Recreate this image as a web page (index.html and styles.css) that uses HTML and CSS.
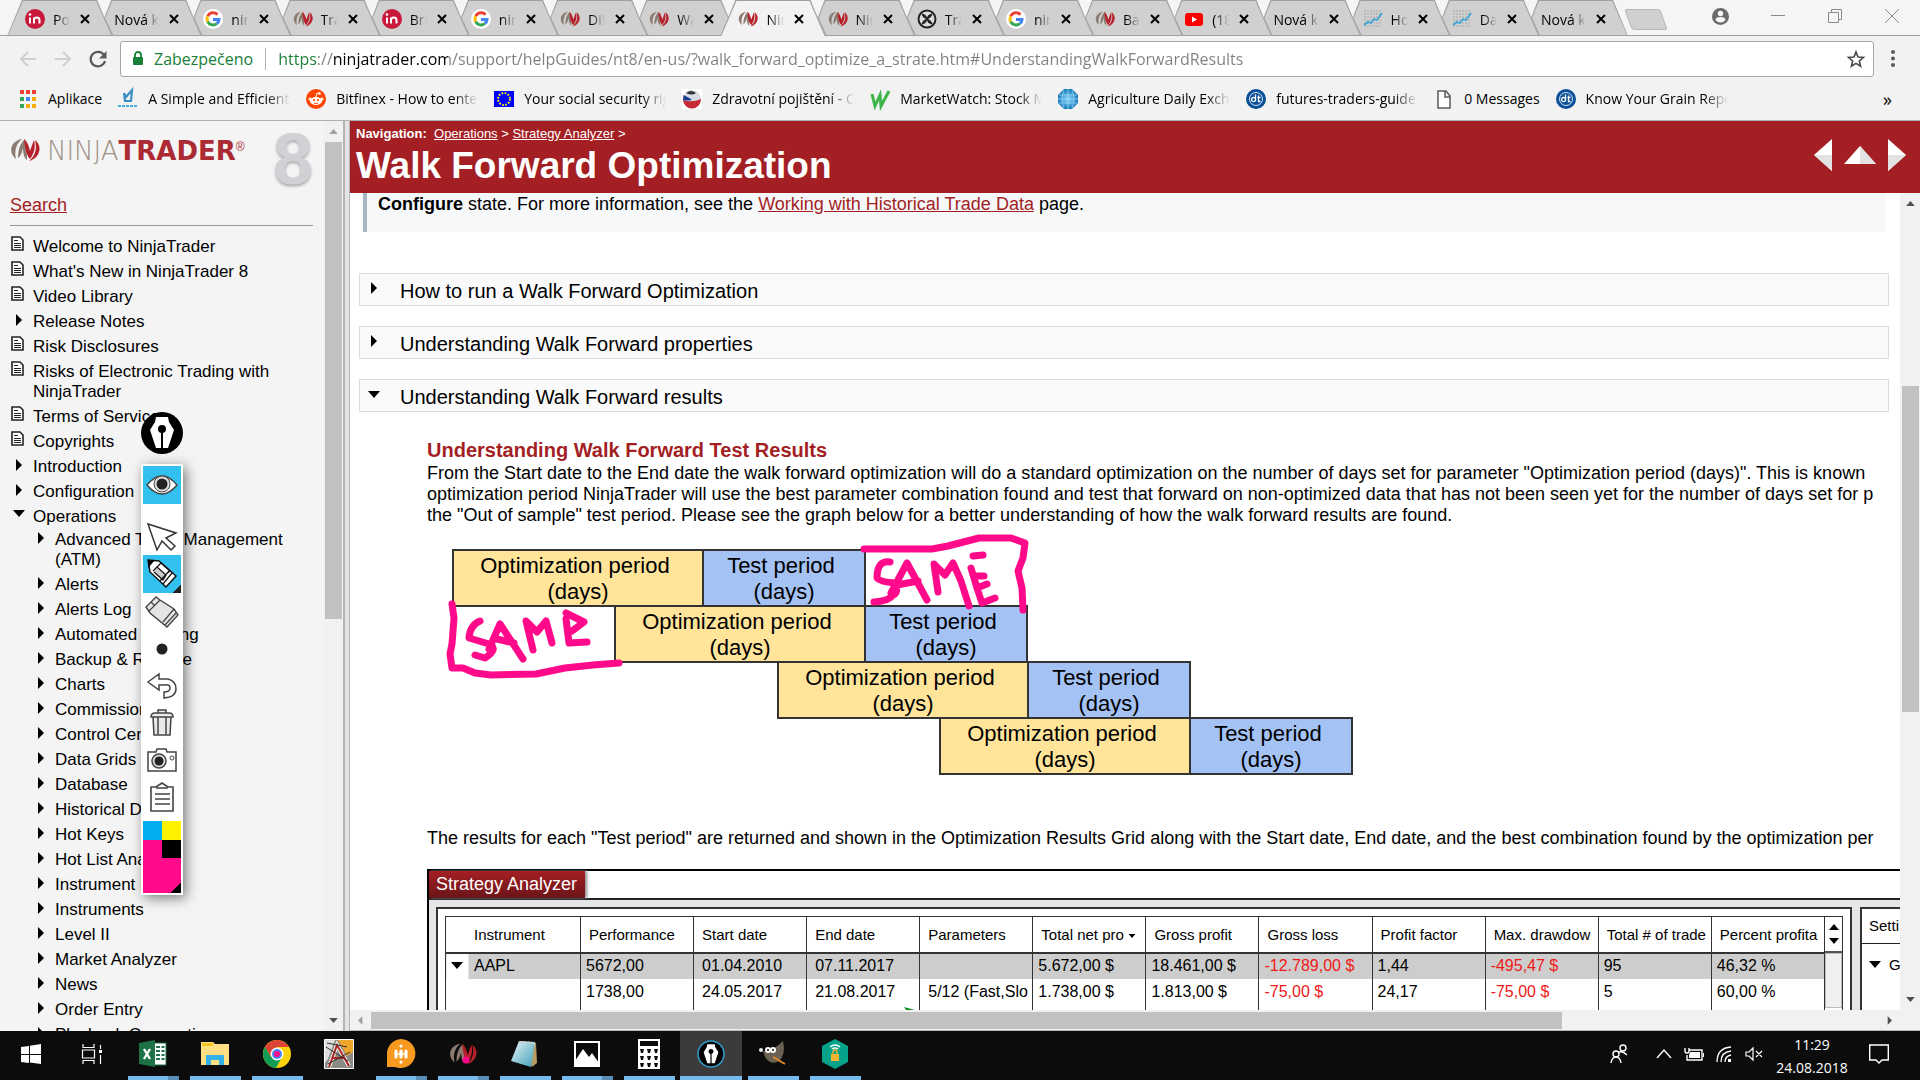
FILE: index.html
```
<!DOCTYPE html>
<html lang="en">
<head>
    <meta charset="UTF-8">
    <meta name="viewport" content="width=device-width, initial-scale=1.0">
    <title>Walk Forward Optimization</title>
    <link rel="stylesheet" href="styles.css">
</head>
<body>
    <!-- shared icons -->
    <svg class="defs" width="0" height="0">
        <defs>
            <linearGradient id="glass" x1="0" y1="0" x2="1" y2="1"><stop offset="0" stop-color="#e6f6fa"/><stop offset="1" stop-color="#3f9db5"/></linearGradient>
            <radialGradient id="globe"><stop offset="0" stop-color="#8fdcff"/><stop offset="1" stop-color="#1779b8"/></radialGradient>
        </defs>
        <symbol id="i-in" viewBox="0 0 20 20"><circle cx="10" cy="10" r="10" fill="#c8193c"/><path d="M5 8.500v6M9 14.500v-6M9 11q0-2.500 2.700-2.500T14.500 11v3.500" fill="none" stroke="#fff" stroke-width="2"/><circle cx="5" cy="5.500" r="1.300" fill="#fff"/></symbol>
        <symbol id="i-google" viewBox="0 0 20 20"><circle cx="10" cy="10" r="10" fill="#fff"/><g fill="none" stroke-width="3"><path d="M14.500 5.600A6 6 0 0 0 4.700 7.200" stroke="#ea4335"/><path d="M4.700 7.200a6 6 0 0 0 0 5.600" stroke="#fbbc05"/><path d="M4.700 12.800a6 6 0 0 0 9.100 1.800" stroke="#34a853"/><path d="M13.800 14.600A6 6 0 0 0 16 10.500h-6" stroke="#4285f4"/></g></symbol>
        <symbol id="i-ninja" viewBox="0 0 30 24"><path d="M6 21C-2 15 0 3 12 1 6 6 4 13 6 21zM8 20c0-8 2-14 6-18 2 5 3 10 3 20-3-2-4-7-4-12-1 4-2 8-5 10z" fill="#8c7b70"/><path d="M25 2c8 6 5 18-6 21 7-6 8-13 6-21zM14 1c2 1 5 6 6 12 1-3 2-6 4-11 2 7 0 14-4 19-4-4-5-12-6-20z" fill="#b5202b"/></symbol>
        <symbol id="i-ring" viewBox="0 0 20 20"><circle cx="10" cy="10" r="8.500" fill="#ddd" stroke="#222" stroke-width="2"/><path d="M5 5l10 10M15 5L5 15" stroke="#222" stroke-width="1.500"/><path d="M5 5q5 0 5 5-5-1-5-5zM15 5q-5 0-5 5 5-1 5-5zM5 15q0-4 5-5 0 5-5 5zM15 15q0-4-5-5 0 5 5 5z" fill="#222"/></symbol>
        <symbol id="i-youtube" viewBox="0 0 20 20"><rect x="1" y="4" width="18" height="13" rx="3" fill="#f00"/><path d="M8 7.500v6l5-3z" fill="#fff"/></symbol>
        <symbol id="i-chart" viewBox="0 0 20 20"><path d="M1 2h18M1 5h18M1 8h18M1 11h18M1 14h18M1 17h18" stroke="#b5b5b5" stroke-width="1.600" stroke-dasharray="2 1"/><path d="M1 16l4-3 3 1 3-4 3 1 5-7" fill="none" stroke="#3aa5d6" stroke-width="1.800"/></symbol>
        <symbol id="i-x" viewBox="0 0 10 10"><path d="M1 1l8 8M9 1L1 9" stroke="currentColor" stroke-width="2"/></symbol>
        <symbol id="i-page" viewBox="0 0 13 15"><path d="M1 1h8l3 3v10H1z" fill="#fff" stroke="#222" stroke-width="1.600"/><path d="M3 4.500h4M3 7.500h7M3 9.500h7M3 11.500h7" stroke="#222"/></symbol>
        <symbol id="i-right" viewBox="0 0 7 12"><path d="M1 0l6 6-6 6z" fill="currentColor"/></symbol>
        <symbol id="i-down" viewBox="0 0 12 7"><path d="M0 0h12L6 7z" fill="currentColor"/></symbol>
        <symbol id="i-nib" viewBox="0 0 26 32"><path d="M7 0h12l1 5 5 8-6 18h-5V14h-2v17H7L1 13l5-8z" fill="#fff"/><circle cx="13" cy="12" r="4" fill="#000"/></symbol>
        <symbol id="i-dt" viewBox="0 0 20 20"><circle cx="10" cy="10" r="10" fill="#0b4f98"/><circle cx="10" cy="10" r="6.500" fill="none" stroke="#d7e6f5"/><path d="M9.500 5.500v7M9.500 10.500a2 2 0 1 0 0 .1M12.500 6.500v6h2M11.500 8.500h3" fill="none" stroke="#fff" stroke-width="1.300"/></symbol>
    </svg>

    <header class="browser">
        <div class="tabstrip">
            <ul class="tabs">
                <li class="tab"><svg class="fav"><use href="#i-in"/></svg><span class="tab-title">Pol</span><button class="tab-close" aria-label="Close"><svg><use href="#i-x"/></svg></button></li>
                <li class="tab"><span class="tab-title">Nová k</span><button class="tab-close" aria-label="Close"><svg><use href="#i-x"/></svg></button></li>
                <li class="tab"><svg class="fav"><use href="#i-google"/></svg><span class="tab-title">nin</span><button class="tab-close" aria-label="Close"><svg><use href="#i-x"/></svg></button></li>
                <li class="tab"><svg class="fav"><use href="#i-ninja"/></svg><span class="tab-title">Tra</span><button class="tab-close" aria-label="Close"><svg><use href="#i-x"/></svg></button></li>
                <li class="tab"><svg class="fav"><use href="#i-in"/></svg><span class="tab-title">Bri</span><button class="tab-close" aria-label="Close"><svg><use href="#i-x"/></svg></button></li>
                <li class="tab"><svg class="fav"><use href="#i-google"/></svg><span class="tab-title">nin</span><button class="tab-close" aria-label="Close"><svg><use href="#i-x"/></svg></button></li>
                <li class="tab"><svg class="fav"><use href="#i-ninja"/></svg><span class="tab-title">Dif</span><button class="tab-close" aria-label="Close"><svg><use href="#i-x"/></svg></button></li>
                <li class="tab"><svg class="fav"><use href="#i-ninja"/></svg><span class="tab-title">Wa</span><button class="tab-close" aria-label="Close"><svg><use href="#i-x"/></svg></button></li>
                <li class="tab active"><svg class="fav"><use href="#i-ninja"/></svg><span class="tab-title">Nin</span><button class="tab-close" aria-label="Close"><svg><use href="#i-x"/></svg></button></li>
                <li class="tab"><svg class="fav"><use href="#i-ninja"/></svg><span class="tab-title">Nin</span><button class="tab-close" aria-label="Close"><svg><use href="#i-x"/></svg></button></li>
                <li class="tab"><svg class="fav"><use href="#i-ring"/></svg><span class="tab-title">Tra</span><button class="tab-close" aria-label="Close"><svg><use href="#i-x"/></svg></button></li>
                <li class="tab"><svg class="fav"><use href="#i-google"/></svg><span class="tab-title">nin</span><button class="tab-close" aria-label="Close"><svg><use href="#i-x"/></svg></button></li>
                <li class="tab"><svg class="fav"><use href="#i-ninja"/></svg><span class="tab-title">Ba</span><button class="tab-close" aria-label="Close"><svg><use href="#i-x"/></svg></button></li>
                <li class="tab"><svg class="fav"><use href="#i-youtube"/></svg><span class="tab-title">(18</span><button class="tab-close" aria-label="Close"><svg><use href="#i-x"/></svg></button></li>
                <li class="tab"><span class="tab-title">Nová k</span><button class="tab-close" aria-label="Close"><svg><use href="#i-x"/></svg></button></li>
                <li class="tab"><svg class="fav"><use href="#i-chart"/></svg><span class="tab-title">Ho</span><button class="tab-close" aria-label="Close"><svg><use href="#i-x"/></svg></button></li>
                <li class="tab"><svg class="fav"><use href="#i-chart"/></svg><span class="tab-title">Da</span><button class="tab-close" aria-label="Close"><svg><use href="#i-x"/></svg></button></li>
                <li class="tab"><span class="tab-title">Nová k</span><button class="tab-close" aria-label="Close"><svg><use href="#i-x"/></svg></button></li>
            </ul>
            <button class="new-tab" aria-label="New tab"></button>
            <div class="window-buttons">
                <button aria-label="Profile"><svg width="17" height="17" viewBox="0 0 17 17"><circle cx="8.500" cy="8.500" r="8.500" fill="#6b6b6b"/><circle cx="8.500" cy="5.500" r="2.700" fill="#f5f5f5"/><path d="M3.500 12q0-3 5-3t5 3q-2 2.500-5 2.500T3.500 12z" fill="#f5f5f5"/></svg></button>
                <button aria-label="Minimize"><svg width="14" height="14" viewBox="0 0 14 14"><path d="M0 6.500h14" stroke="#8a8a8a"/></svg></button>
                <button aria-label="Restore"><svg width="14" height="14" viewBox="0 0 14 14"><path d="M.5 3.500h10v10H.5zM3.500 3V.5h10v10H11" fill="none" stroke="#8a8a8a"/></svg></button>
                <button aria-label="Close"><svg width="14" height="14" viewBox="0 0 14 14"><path d="M0 0l14 14M14 0L0 14" stroke="#8a8a8a"/></svg></button>
            </div>
        </div>
        <div class="toolbar">
            <button aria-label="Back"><svg width="18" height="18" viewBox="0 0 18 18"><path d="M17 9H2M9 2L2 9l7 7" fill="none" stroke="#cfcfcf" stroke-width="2"/></svg></button>
            <button aria-label="Forward"><svg width="18" height="18" viewBox="0 0 18 18"><path d="M1 9h15M9 2l7 7-7 7" fill="none" stroke="#cfcfcf" stroke-width="2"/></svg></button>
            <button aria-label="Reload"><svg width="18" height="18" viewBox="0 0 18 18"><path d="M15 5A7.300 7.300 0 1 0 16 11" fill="none" stroke="#5a5a5a" stroke-width="2.200"/><path d="M17.500 1v7.500H10z" fill="#5a5a5a"/></svg></button>
            <div class="omnibox">
                <svg width="12" height="15" viewBox="0 0 12 15"><path d="M3 6V4a3 3 0 0 1 6 0v2" fill="none" stroke="#188038" stroke-width="1.800"/><rect x="1" y="6" width="10" height="8" rx="1" fill="#188038"/></svg>
                <label class="secure" for="url">Zabezpečeno</label>
                <input id="url" type="text" value="https://ninjatrader.com/support/helpGuides/nt8/en-us/?walk_forward_optimize_a_strate.htm#UnderstandingWalkForwardResults">
                <button aria-label="Bookmark"><svg width="18" height="18" viewBox="0 0 18 18"><path d="M9 2l2 5 5.500.4-4.200 3.600 1.300 5.300L9 13.400l-4.600 2.900L5.700 11 1.500 7.400 7 7z" fill="none" stroke="#4a4a4a" stroke-width="1.600"/></svg></button>
            </div>
            <button aria-label="Menu"><svg width="4" height="18" viewBox="0 0 4 18"><g fill="#5a5a5a"><circle cx="2" cy="2" r="2"/><circle cx="2" cy="8.500" r="2"/><circle cx="2" cy="15" r="2"/></g></svg></button>
        </div>
        <nav class="bookmarks">
            <a href="#"><svg class="fav" viewBox="0 0 20 20"><path d="M2 1h4v4H2zM8 1h4v4H8zM14 1h4v4h-4z" fill="#ea4335"/><path d="M2 8h4v4H2z" fill="#34a853"/><path d="M8 8h4v4H8z" fill="#4285f4"/><path d="M14 8h4v4h-4zM8 15h4v4H8zM14 15h4v4h-4z" fill="#fbab05"/><path d="M2 15h4v4H2z" fill="#34a853"/></svg><span>Aplikace</span></a>
            <a class="faded" href="#"><svg class="fav" viewBox="0 0 20 20"><path d="M6 4l1 8h6l1-11-6 7-2-4" fill="none" stroke="#3a8fc4" stroke-width="2.200"/><path d="M0 17h20" stroke="#45aee5" stroke-width="2" stroke-dasharray="3 1"/></svg><span>A Simple and Efficient</span></a>
            <a class="faded" href="#"><svg class="fav" viewBox="0 0 20 20"><circle cx="10" cy="10" r="10" fill="#ff4500"/><ellipse cx="10" cy="12" rx="6" ry="4" fill="#fff"/><circle cx="4" cy="10" r="1.500" fill="#fff"/><circle cx="16" cy="10" r="1.500" fill="#fff"/><circle cx="13.500" cy="4.500" r="1.300" fill="#fff"/><path d="M10 8l1-4 2.500.5" fill="none" stroke="#fff"/><circle cx="8" cy="11" r="1.100" fill="#ff4500"/><circle cx="12" cy="11" r="1.100" fill="#ff4500"/><path d="M8 14q2 1 4 0" fill="none" stroke="#ff4500"/></svg><span>Bitfinex - How to ente</span></a>
            <a class="faded" href="#"><svg class="fav" viewBox="0 0 20 20"><path d="M0 2h20v16H0z" fill="#00f"/><circle cx="10" cy="10" r="6" fill="none" stroke="#ff0" stroke-width="2" stroke-dasharray="1.600 1.540"/></svg><span>Your social security rig</span></a>
            <a class="faded" href="#"><svg class="fav" viewBox="0 0 20 20"><path d="M0 0h20v20H0z" fill="#fff"/><circle cx="10" cy="10" r="9" fill="#d8dde6"/><path d="M1 11q9 3 18-1a9 9 0 0 1-18 1z" fill="#c62a35"/><path d="M1.500 6Q8 9 10 11q-5 1-9 0z" fill="#1b3d8d"/><path d="M4 4q5-4 10 0-4 3-10 0z" fill="#333"/></svg><span>Zdravotní pojištění - C</span></a>
            <a class="faded" href="#"><svg class="fav" viewBox="0 0 20 20"><path d="M2 5l3 12 5-11 1 11L19 2" fill="none" stroke="#3db54a" stroke-width="3"/></svg><span>MarketWatch: Stock M</span></a>
            <a class="faded" href="#"><svg class="fav" viewBox="0 0 20 20"><path d="M6 0h8l6 6v8l-6 6H6l-6-6V6z" fill="url(#globe)"/><path d="M1 6h18M0 10h20M1 14h18M6 1q-4 9 0 18M10 0v20M14 1q4 9 0 18" fill="none" stroke="#9bdcf7" stroke-width=".7"/></svg><span>Agriculture Daily Exch</span></a>
            <a class="faded" href="#"><svg class="fav"><use href="#i-dt"/></svg><span>futures-traders-guide</span></a>
            <a href="#"><svg class="fav" viewBox="0 0 20 20"><path d="M4 2h8l4 5v12H4zM11 2v6h5" fill="#fff" stroke="#5a5a5a" stroke-width="1.500"/></svg><span>0 Messages</span></a>
            <a class="faded" href="#"><svg class="fav"><use href="#i-dt"/></svg><span>Know Your Grain Repo</span></a>
            <button class="more" aria-label="More bookmarks">»</button>
        </nav>
    </header>

    <div class="frames">
        <aside class="sidebar">
            <div class="sidebar-body">
                <div class="logo">
                    <svg class="logo-mark"><use href="#i-ninja"/></svg>
                    <span class="logo-text">NINJA<b>TRADER</b></span>
                    <span class="logo-reg">®</span>
                    <span class="logo-eight">8</span>
                </div>
                <a class="search" href="#">Search</a>
                <ul class="tree">
                    <li><svg class="page"><use href="#i-page"/></svg><a href="#">Welcome to NinjaTrader</a></li>
                    <li><svg class="page"><use href="#i-page"/></svg><a href="#">What's New in NinjaTrader 8</a></li>
                    <li><svg class="page"><use href="#i-page"/></svg><a href="#">Video Library</a></li>
                    <li><svg class="closed"><use href="#i-right"/></svg><a href="#">Release Notes</a></li>
                    <li><svg class="page"><use href="#i-page"/></svg><a href="#">Risk Disclosures</a></li>
                    <li><svg class="page"><use href="#i-page"/></svg><a href="#">Risks of Electronic Trading with NinjaTrader</a></li>
                    <li><svg class="page"><use href="#i-page"/></svg><a href="#">Terms of Service</a></li>
                    <li><svg class="page"><use href="#i-page"/></svg><a href="#">Copyrights</a></li>
                    <li><svg class="closed"><use href="#i-right"/></svg><a href="#">Introduction</a></li>
                    <li><svg class="closed"><use href="#i-right"/></svg><a href="#">Configuration</a></li>
                    <li><svg class="open"><use href="#i-down"/></svg><a href="#">Operations</a></li>
                </ul>
                <ul class="tree subtree">
                    <li><svg class="closed"><use href="#i-right"/></svg><a href="#">Advanced Trade Management (ATM)</a></li>
                    <li><svg class="closed"><use href="#i-right"/></svg><a href="#">Alerts</a></li>
                    <li><svg class="closed"><use href="#i-right"/></svg><a href="#">Alerts Log</a></li>
                    <li><svg class="closed"><use href="#i-right"/></svg><a href="#">Automated Trading</a></li>
                    <li><svg class="closed"><use href="#i-right"/></svg><a href="#">Backup &amp; Restore</a></li>
                    <li><svg class="closed"><use href="#i-right"/></svg><a href="#">Charts</a></li>
                    <li><svg class="closed"><use href="#i-right"/></svg><a href="#">Commissions</a></li>
                    <li><svg class="closed"><use href="#i-right"/></svg><a href="#">Control Center</a></li>
                    <li><svg class="closed"><use href="#i-right"/></svg><a href="#">Data Grids</a></li>
                    <li><svg class="closed"><use href="#i-right"/></svg><a href="#">Database</a></li>
                    <li><svg class="closed"><use href="#i-right"/></svg><a href="#">Historical Data</a></li>
                    <li><svg class="closed"><use href="#i-right"/></svg><a href="#">Hot Keys</a></li>
                    <li><svg class="closed"><use href="#i-right"/></svg><a href="#">Hot List Analyzer</a></li>
                    <li><svg class="closed"><use href="#i-right"/></svg><a href="#">Instrument Lists</a></li>
                    <li><svg class="closed"><use href="#i-right"/></svg><a href="#">Instruments</a></li>
                    <li><svg class="closed"><use href="#i-right"/></svg><a href="#">Level II</a></li>
                    <li><svg class="closed"><use href="#i-right"/></svg><a href="#">Market Analyzer</a></li>
                    <li><svg class="closed"><use href="#i-right"/></svg><a href="#">News</a></li>
                    <li><svg class="closed"><use href="#i-right"/></svg><a href="#">Order Entry</a></li>
                    <li><svg class="closed"><use href="#i-right"/></svg><a href="#">Playback Connection</a></li>
                </ul>
            </div>
            <div class="vscroll">
                <svg class="up"><use href="#i-down"/></svg>
                <div class="track"><div class="thumb side-thumb"></div></div>
                <svg class="down"><use href="#i-down"/></svg>
            </div>
        </aside>
        <div class="splitter"></div>

        <main class="content">
            <header class="topic-header">
                <div>
                    <p class="crumbs"><b>Navigation:</b>&nbsp; <a href="#">Operations</a> &gt; <a href="#">Strategy Analyzer</a> &gt;</p>
                    <h1>Walk Forward Optimization</h1>
                </div>
                <div class="pager">
                    <a href="#" aria-label="Previous"><svg width="18" height="32" viewBox="0 0 18 32"><path d="M18 0v32L0 16z" fill="#fff"/><path d="M18 16v16L0 16z" fill="#e3e3e3"/></svg></a>
                    <a href="#" aria-label="Up"><svg width="32" height="18" viewBox="0 0 32 18"><path d="M16 0l16 18H0z" fill="#fff"/><path d="M16 0l16 18H16z" fill="#e3e3e3"/></svg></a>
                    <a href="#" aria-label="Next"><svg width="18" height="32" viewBox="0 0 18 32"><path d="M0 0v32l18-16z" fill="#fff"/><path d="M0 16v16l18-16z" fill="#e3e3e3"/></svg></a>
                </div>
            </header>
            <div class="topic-row">
                <div class="topic">
                    <p class="note"><b>Configure</b> state. For more information, see the <a href="#">Working with Historical Trade Data</a> page.</p>
                    <button class="toggle"><svg class="closed"><use href="#i-right"/></svg>How to run a Walk Forward Optimization</button>
                    <button class="toggle"><svg class="closed"><use href="#i-right"/></svg>Understanding Walk Forward properties</button>
                    <button class="toggle"><svg class="open"><use href="#i-down"/></svg>Understanding Walk Forward results</button>

                    <section class="results">
                        <h2>Understanding Walk Forward Test Results</h2>
                        <p>From the Start date to the End date the walk forward optimization will do a standard optimization on the number of days set for parameter "Optimization period (days)". This is known<br>
                        optimization period NinjaTrader will use the best parameter combination found and test that forward on non-optimized data that has not been seen yet for the number of days set for p<br>
                        the "Out of sample" test period. Please see the graph below for a better understanding of how the walk forward results are found.</p>

                        <div class="periods">
                            <div class="period-row"><span class="opt">Optimization period&nbsp;<br>(days)</span><span class="test">Test period&nbsp;<br>(days)</span></div>
                            <div class="period-row step-1"><span class="opt">Optimization period&nbsp;<br>(days)</span><span class="test">Test period&nbsp;<br>(days)</span></div>
                            <div class="period-row step-2"><span class="opt">Optimization period&nbsp;<br>(days)</span><span class="test">Test period&nbsp;<br>(days)</span></div>
                            <div class="period-row step-3"><span class="opt">Optimization period&nbsp;<br>(days)</span><span class="test">Test period&nbsp;<br>(days)</span></div>
                            <!-- pen marks -->
                            <svg class="ink" width="600" height="160" viewBox="0 0 600 160">
                                <path d="M412 0h68l16-3 31-8h32l14 5-2 15-5 13 4 17 1 22"/>
                                <path d="M438 13q-13-2-13 16 3 4 18 5 4 10-2 12-4 6-19 7M439 44l16-30 20 37M445 36l21-4M486 43l-4-28 11 11 8-12 8 18 8 25M521 7l10-1M519 19l6 20 5 15 13-5M523 27h9M525 39l10-4"/>
                                <path d="M0 55l2 14-2 26-2 10 2 14h11l12 5 16 2 45-1 29-6 28-3 26-2"/>
                                <path d="M28 72q-10 4-11 17l20 6q10 5-4 14l-10-3M37 100l11-25 23 35M45 90l17 4M81 101l-7-29 11 11 9-11 6 22M114 64l18 9-12 9M114 70l3 24 18-1"/>
                            </svg>
                        </div>

                        <p>The results for each "Test period" are returned and shown in the Optimization Results Grid along with the Start date, End date, and the best combination found by the optimization per</p>

                        <div class="analyzer">
                            <div class="analyzer-title"><span>Strategy Analyzer</span></div>
                            <div class="analyzer-body">
                                <div class="grid-box">
                                    <table class="grid">
                                        <thead>
                                            <tr><th class="first">Instrument</th><th>Performance</th><th>Start date</th><th>End date</th><th>Parameters</th><th>Total net pro <svg class="sort"><use href="#i-down"/></svg></th><th>Gross profit</th><th>Gross loss</th><th>Profit factor</th><th>Max. drawdow</th><th>Total # of trade</th><th>Percent profita</th></tr>
                                        </thead>
                                        <tbody>
                                            <tr class="selected"><td class="first"><svg class="open"><use href="#i-down"/></svg>AAPL</td><td>5672,00</td><td class="wide">01.04.2010</td><td class="wide">07.11.2017</td><td></td><td>5.672,00 $</td><td>18.461,00 $</td><td class="neg">-12.789,00 $</td><td>1,44</td><td class="neg">-495,47 $</td><td>95</td><td>46,32 %</td></tr>
                                            <tr><td class="first"></td><td>1738,00</td><td class="wide">24.05.2017</td><td class="wide">21.08.2017</td><td class="wide">5/12 (Fast,Slo</td><td>1.738,00 $</td><td>1.813,00 $</td><td class="neg">-75,00 $</td><td>24,17</td><td class="neg">-75,00 $</td><td>5</td><td>60,00 %</td></tr>
                                            <tr><td class="first"></td><td></td><td></td><td></td><td></td><td></td><td></td><td></td><td></td><td></td><td></td><td></td></tr>
                                        </tbody>
                                    </table>
                                    <div class="grid-scroll">
                                        <div class="spin"><svg class="up"><use href="#i-down"/></svg><svg class="down"><use href="#i-down"/></svg></div>
                                        <div class="grid-thumb"></div>
                                    </div>
                                    <svg class="arrow-tip" width="18" height="12" viewBox="0 0 18 12"><path d="M0 0l18 5v7H8z" fill="#0a8f1c"/></svg>
                                </div>
                                <div class="settings-box">
                                    <div class="settings-title">Setti</div>
                                    <div class="settings-group"><svg class="open"><use href="#i-down"/></svg>G</div>
                                </div>
                            </div>
                        </div>
                    </section>
                </div>
                <div class="vscroll">
                    <svg class="up dark"><use href="#i-down"/></svg>
                    <div class="track"><div class="thumb main-thumb"></div></div>
                    <svg class="down"><use href="#i-down"/></svg>
                </div>
            </div>
            <div class="hscroll">
                <svg class="left"><use href="#i-right"/></svg>
                <div class="track"><div class="thumb"></div></div>
                <svg class="right"><use href="#i-right"/></svg>
            </div>
        </main>
    </div>

    <footer class="taskbar">
        <button class="start" aria-label="Start"><svg width="20" height="20" viewBox="0 0 20 20"><path d="M0 3l8-1v8H0zM9 1.800L20 0v10H9zM0 11h8v8l-8-1zM9 11h11v9L9 18.500z" fill="#fff"/></svg></button>
        <button class="start" aria-label="Task view"><svg width="20" height="20" viewBox="0 0 20 20"><path d="M1 0v3.500h11V0M1 20v-3.500h11V20M.5 6h12v8H.5zM18.500 1v4M18.500 11v9" fill="none" stroke="#fff" stroke-width="1.200"/><path d="M17 6h3v3h-3z" fill="#fff"/></svg></button>
        <button class="running stacked" aria-label="Excel"><svg width="28" height="28" viewBox="0 0 28 28"><path d="M15 3h12v22H15z" fill="#fff" stroke="#1e7145"/><path d="M17 7h4M17 11h4M17 15h4M17 19h4M22.500 7h3M22.500 11h3M22.500 15h3M22.500 19h3" stroke="#1e7145" stroke-width="2"/><path d="M0 3l16-3v27L0 24z" fill="#1e7145"/><path d="M5 9l6 10M11 9L5 19" stroke="#fff" stroke-width="2.400"/></svg></button>
        <button class="running" aria-label="Explorer"><svg width="28" height="24" viewBox="0 0 28 24"><path d="M0 0h12l2 2h14v21H0z" fill="#ffdf84"/><path d="M1 1h11v3H1z" fill="#f7c21b"/><path d="M5 13h18v10h-5v-5h-8v5H5z" fill="#33b1e8"/></svg></button>
        <button class="running" aria-label="Chrome"><svg width="28" height="28" viewBox="0 0 28 28"><circle cx="14" cy="14" r="14" fill="#fcd20b"/><path d="M1.900 7A14 14 0 0 1 26.100 7H14l-6 10z" fill="#db4437"/><path d="M1.900 7A14 14 0 0 0 13 28l6-11H8z" fill="#0f9d58"/><circle cx="14" cy="14" r="6.500" fill="#fff"/><circle cx="14" cy="14" r="5" fill="#4285f4"/><circle cx="14" cy="14" r="3" fill="#ff0a8a"/></svg></button>
        <button aria-label="Editor"><svg width="30" height="30" viewBox="0 0 30 30"><path d="M.5.500h29v29H.5z" fill="#8b8b86"/><path d="M1 1h10L4 20l-3 4z" fill="#ddd"/><path d="M14 1h15v12l-6 4z" fill="#f0a52b"/><path d="M5 28l8-22 12 21" fill="none" stroke="#eee" stroke-width="4"/><path d="M5 28l8-22 12 21M8 19h12" fill="none" stroke="#b3231f" stroke-width="2"/><path d="M2 8l22 14M4 25l22-12M3 4l20 4" stroke="#333"/><path d="M.5.500h29v29H.5z" fill="none" stroke="#fff"/></svg></button>
        <button class="running stacked" aria-label="Chat"><svg width="30" height="30" viewBox="0 0 30 30"><path d="M15 0a15 14.500 0 1 1-6 28H1V16A15 15 0 0 1 15 0z" fill="#f79a1f"/><g stroke="#fff" stroke-width="3.200" stroke-linecap="round"><path d="M10 12v6M15 12v6M20 12v6M15 7v.1M15 23v.1"/></g><path d="M9 15h12" stroke="#fff" stroke-width="1.500"/></svg></button>
        <button class="running stacked" aria-label="NinjaTrader"><svg width="28" height="24"><use href="#i-ninja"/><circle cx="17" cy="18" r="3.500" fill="#ff0a8a"/></svg></button>
        <button class="running" aria-label="Notes"><svg width="28" height="28" viewBox="0 0 28 28"><path d="M8 1l17 2 1 20-5 4z" fill="#b79b63"/><path d="M8 1l16 1-4 25L0 21z" fill="url(#glass)"/><path d="M8 2l16 1" stroke="#ccc" stroke-width="2" stroke-dasharray="2 1"/></svg></button>
        <button class="running stacked" aria-label="Photos"><svg width="26" height="26" viewBox="0 0 26 26"><path d="M1 1h24v24H1z" fill="#0c0c0c" stroke="#fff" stroke-width="2"/><path d="M1 20l8-12 6 8 3-4 7 10v3H1z" fill="#fff"/></svg></button>
        <button class="running" aria-label="Calculator"><svg width="22" height="30" viewBox="0 0 22 30"><path d="M0 0h22v30H0z" fill="#fff"/><path d="M2 2h18v5H2zM2 10h4l-1 4H3zM9 10h4l-1 4h-2zM16 10h4l-1 4h-2zM2 17h4l-1 4H3zM9 17h4l-1 4h-2zM16 17h4l-1 4h-2zM2 24h4l-1 4H3zM9 24h4l-1 4h-2zM16 24h4l-1 4h-2z" fill="#0c0c0c"/></svg></button>
        <button class="running current" aria-label="Pen"><svg width="28" height="28" viewBox="0 0 28 28"><circle cx="14" cy="14" r="13" fill="#000" stroke="#2f9fc6" stroke-width="1.500"/><use href="#i-nib" x="6" y="4" width="16" height="20"/></svg></button>
        <button class="running" aria-label="Gimp"><svg width="28" height="26" viewBox="0 0 28 26"><path d="M24 0q3 14-4 20-8 5-14-4l-2-6q8 2 20-10z" fill="#6b6255"/><circle cx="9" cy="9" r="3" fill="#fff"/><circle cx="14" cy="9" r="3" fill="#fff"/><circle cx="9" cy="9" r="1"/><circle cx="14" cy="9" r="1"/><circle cx="2" cy="9" r="2" fill="#eee"/><path d="M14 16l12 7" stroke="#e58b2a" stroke-width="2"/></svg></button>
        <button class="running" aria-label="Secure"><svg width="28" height="30" viewBox="0 0 28 30"><path d="M14 0l13 7v16l-13 7-13-7V7z" fill="#06a28a"/><path d="M10 15h8v7h-8z" fill="#f5b52d"/><path d="M12 15v-2a2 2 0 0 1 4 0v2" fill="none" stroke="#f5b52d" stroke-width="1.300"/><path d="M9 8q5-4 10 0M11 10q3-2 6 0" fill="none" stroke="#fff" stroke-width="1.300"/></svg></button>
        <div class="tray">
            <button aria-label="People"><svg width="18" height="20" viewBox="0 0 18 20"><g fill="none" stroke="#fff" stroke-width="1.400"><circle cx="13" cy="4" r="3"/><circle cx="6" cy="10" r="3"/><path d="M9 8q4-1 8 3M1 19q1-6 5-6t5 6"/></g></svg></button>
            <button aria-label="Hidden icons"><svg width="16" height="10" viewBox="0 0 16 10"><path d="M1 9l7-8 7 8" fill="none" stroke="#fff" stroke-width="1.400"/></svg></button>
            <button aria-label="Battery"><svg width="20" height="14" viewBox="0 0 20 14"><path d="M5 3h13v10H3V8M1 1v3q0 2 2 2t2-2V1" fill="none" stroke="#fff" stroke-width="1.400"/><path d="M6 5h10v6H5V8zM19 6h1v4h-1z" fill="#fff"/></svg></button>
            <button aria-label="Network"><svg width="16" height="16" viewBox="0 0 16 16"><g fill="none" stroke="#fff" stroke-width="1.300"><path d="M1 16Q1 2 15 1M5 16Q5 6 15 5M9 16q0-6 6-7"/></g><path d="M12 13h3v3h-3z" fill="#fff"/></svg></button>
            <button aria-label="Volume"><svg width="18" height="14" viewBox="0 0 18 14"><path d="M1 5h3l4-4v12L4 9H1zM11 4l6 6M17 4l-6 6" fill="none" stroke="#fff" stroke-width="1.200"/></svg></button>
            <div class="clock"><span>11:29</span><span>24.08.2018</span></div>
            <button aria-label="Notifications"><svg width="20" height="20" viewBox="0 0 20 20"><path d="M.7 1h18.600v15H13l-3 3-3-3H.7z" fill="none" stroke="#fff" stroke-width="1.400"/></svg></button>
        </div>
    </footer>

    <!-- floating pen tool -->
    <div class="pen-tool">
        <button class="pen-badge" aria-label="Pen"><svg width="26" height="32"><use href="#i-nib"/></svg></button>
        <div class="pen-panel">
            <button class="on" aria-label="Show"><svg width="32" height="22" viewBox="0 0 32 22"><path d="M1 11Q16-7 31 11 16 29 1 11z" fill="#fff" stroke="#444" stroke-width="1.400"/><circle cx="16" cy="10" r="8" fill="#ddd" stroke="#444"/><circle cx="16" cy="10" r="5.500" fill="#222"/></svg></button>
            <button class="cursor" aria-label="Select"><svg width="32" height="30" viewBox="0 0 32 30"><path d="M2 2l28 9-10 5 9 8-4 4-9-9-5 9z" fill="#fff" stroke="#333" stroke-width="1.500"/></svg></button>
            <button class="on corner" aria-label="Pencil"><svg width="30" height="30" viewBox="0 0 30 30"><path d="M1 1l11 1 17 15-10 11L3 13z" fill="#fff" stroke="#111" stroke-width="1.500"/><path d="M1 1h7L1 9z"/><path d="M6 12l8-8M10 8l9 8-3 5-9-8" fill="#ccc" stroke="#111" stroke-width="1.200"/><path d="M14 4l9 8-5 4M25 14l-9 11M22 12l-9 10" fill="none" stroke="#111" stroke-width="1.200"/></svg></button>
            <button aria-label="Eraser"><svg width="34" height="32" viewBox="0 0 34 32"><path d="M11 1L1 11l4 6 17 14 11-12-4-6L15 4z" fill="#e4e4e4" stroke="#444" stroke-width="1.400"/><path d="M15 4L4 15M29 13L18 26M31 17L20 29M6 6l4 4" fill="none" stroke="#444" stroke-width="1.200"/></svg></button>
            <button aria-label="Size"><svg width="12" height="12" viewBox="0 0 12 12"><circle cx="6" cy="6" r="5.500" fill="#222"/></svg></button>
            <button aria-label="Undo"><svg width="30" height="26" viewBox="0 0 30 26"><path d="M1 9l11-8v5h9q8 2 8 10t-12 9v-6q6 0 6-4t-5-3h-6v5z" fill="#fff" stroke="#444" stroke-width="1.500"/></svg></button>
            <button aria-label="Delete"><svg width="24" height="28" viewBox="0 0 24 28"><path d="M3 8l1 18h16l1-18M1 8q0-4 4-4h14q4 0 4 4zM8 4V1h8v3M8 8v17M16 8v17" fill="#e9e9e9" stroke="#444" stroke-width="1.500"/></svg></button>
            <button aria-label="Camera"><svg width="30" height="24" viewBox="0 0 30 24"><path d="M1 4h8l1-3h9l1 3h9v19H1z" fill="#fff" stroke="#444" stroke-width="1.500"/><circle cx="12" cy="13" r="7" fill="#ddd" stroke="#444" stroke-width="1.500"/><circle cx="12" cy="13" r="4.500" fill="#222"/><circle cx="25" cy="10" r="2" fill="none" stroke="#444"/></svg></button>
            <button aria-label="Clipboard"><svg width="24" height="30" viewBox="0 0 24 30"><path d="M1 5h5l6-4 6 4h5v24H1z" fill="#fff" stroke="#444" stroke-width="1.600"/><path d="M6 6h12M5 12h15M5 17h15M5 22h15" stroke="#444" stroke-width="1.500"/></svg></button>
            <div class="palette">
                <button class="cyan" aria-label="Cyan"></button>
                <button class="yellow" aria-label="Yellow"></button>
                <button class="magenta" aria-label="Magenta"></button>
                <button class="black" aria-label="Black"></button>
                <button class="chosen" aria-label="Current colour"></button>
            </div>
        </div>
    </div>
</body>
</html>
```
FILE: styles.css
```
* {
    box-sizing: border-box;
}
body {
    display: flex;
    flex-direction: column;
    height: 100vh;
    margin: 0;
    overflow: hidden;
    font-family: "Liberation Sans", Arial, sans-serif;
    color: #000;
    background: #fff;
}
.defs {
    position: absolute;
}
p, h1, h2, ul {
    margin: 0;
    padding: 0;
}
ul {
    list-style: none;
}
button {
    padding: 0;
    border: none;
    background: none;
    font: inherit;
    color: inherit;
}
svg {
    display: block;
    flex: none;
    overflow: visible;
}
.closed {
    width: 7px;
    height: 12px;
}
.open {
    width: 12px;
    height: 7px;
}
.up {
    transform: rotate(180deg);
}

/* browser chrome */
.browser {
    flex: none;
    font-family: "Open Sans", "Segoe UI", sans-serif;
    background: #f2f2f2;
    border-bottom: 1px solid #b0b0b0;
}
.tabstrip {
    display: flex;
    height: 36px;
    padding-left: 7px;
    background: #f5f5f5;
    border-bottom: 1px solid #a0a0a0;
}
.tabs {
    display: flex;
    flex: 1;
    min-width: 0;
    height: 36px;
}
/* slanted tabs, each one tucked under the tab on its left */
.tab {
    position: relative;
    isolation: isolate;
    display: flex;
    align-items: center;
    flex: 1 1 0;
    min-width: 0;
    margin-right: -16px;
    padding: 2px 22px 0 18px;
    font-size: 14px;
    clip-path: polygon(15px 0, calc(100% - 15px) 0, 100% 100%, 16px 100%, 8px 50%);
    background: #a0a0a0;
}
.tab::before {
    content: "";
    position: absolute;
    inset: 0;
    z-index: -1;
    background: #d0d0d0;
    clip-path: polygon(16px 1px, calc(100% - 16px) 1px, calc(100% - 1px) 35px, 17px 35px, 9px 50%);
}
.tab:first-child {
    clip-path: polygon(15px 0, calc(100% - 15px) 0, 100% 100%, 0 100%);
}
.tab:first-child::before {
    clip-path: polygon(16px 1px, calc(100% - 16px) 1px, calc(100% - 1px) 35px, 1px 35px);
}
.tab.active {
    z-index: 1;
    clip-path: polygon(15px 0, calc(100% - 15px) 0, 100% 100%, 0 100%);
}
.tab.active::before {
    background: #f2f2f2;
    clip-path: polygon(16px 1px, calc(100% - 16px) 1px, calc(100% - 1px) 100%, 1px 100%);
}
.fav {
    width: 20px;
    height: 20px;
}
.tab .fav {
    margin-right: 8px;
}
.tab-title {
    flex: 1;
    min-width: 0;
    margin-right: 10px;
    overflow: hidden;
    white-space: nowrap;
    mask-image: linear-gradient(to left, transparent, #000 14px);
}
.tab-close svg {
    width: 10px;
    height: 10px;
}
.new-tab {
    width: 36px;
    height: 21px;
    margin: 9px 47px 0 16px;
    background: #d0d0d0;
    border: 1px solid #b8b8b8;
    border-radius: 3px;
    transform: skewX(20deg);
}
.window-buttons {
    display: flex;
    height: 32px;
}
.window-buttons button {
    display: flex;
    align-items: center;
    justify-content: center;
    width: 57px;
}
.window-buttons button:first-child {
    width: 18px;
    margin-right: 20px;
}
.toolbar {
    display: flex;
    align-items: center;
    gap: 17px;
    height: 45px;
    padding: 0 25px 0 19px;
}
.omnibox {
    display: flex;
    align-items: center;
    flex: 1;
    height: 36px;
    margin-left: -4px;
    padding: 0 8px 0 11px;
    font-size: 16px;
    background: #fff;
    border: 1px solid #a6a6a6;
    border-radius: 3px;
}
.secure {
    margin-left: 10px;
    padding-right: 12px;
    color: #188038;
    border-right: 1px solid #b0b0b0;
}
.omnibox input {
    flex: 1;
    min-width: 0;
    padding: 0 0 0 12px;
    border: none;
    outline: none;
    font: inherit;
    color: transparent;
    /* scheme, separator, host, path */
    background: linear-gradient(to right, #188038 52px, #808080 52px 67px, #000 67px 182px, #808080 182px);
    background-clip: text;
    -webkit-background-clip: text;
}
.bookmarks {
    display: flex;
    align-items: center;
    gap: 16px;
    height: 39px;
    padding: 0 28px 4px 18px;
    font-size: 14px;
}
.bookmarks a {
    display: flex;
    align-items: center;
    gap: 10px;
    color: #000;
    text-decoration: none;
}
.bookmarks span {
    overflow: hidden;
    white-space: nowrap;
}
.bookmarks .faded span {
    width: 142px;
    mask-image: linear-gradient(to left, transparent, #000 24px);
}
.more {
    margin-left: auto;
    font-size: 18px;
}

/* frames */
.frames {
    display: flex;
    flex: 1;
    min-height: 0;
}
.sidebar {
    display: flex;
    flex: none;
    width: 343px;
    background: #f4f4f4;
}
.sidebar-body {
    flex: 1;
    min-width: 0;
    padding: 10px 10px 0;
    overflow: hidden;
}
.logo {
    display: flex;
    height: 64px;
}
.logo-mark {
    width: 30px;
    height: 24px;
    margin-top: 7px;
}
.logo-text {
    margin: 4px 0 0 7px;
    font-family: "DejaVu Sans", Verdana, sans-serif;
    font-size: 26px;
    font-weight: 200;
    line-height: 32px;
    color: #9d9087;
}
.logo-text b {
    font-weight: 700;
    color: #ab2a33;
}
.logo-reg {
    margin-top: 9px;
    font-size: 12px;
    color: #ab2a33;
}
.logo-eight {
    margin-left: auto;
    font-size: 72px;
    font-weight: bold;
    line-height: 56px;
    color: #cfd1d4;
    text-shadow: 0 2px 3px #aaa;
}
.search {
    display: block;
    height: 31px;
    margin-bottom: 11px;
    font-size: 18px;
    line-height: 20px;
    color: #a31f24;
    border-bottom: 1px solid #999;
}
.tree li {
    display: flex;
    margin-bottom: 5px;
    padding-right: 40px;
    font-size: 17px;
    line-height: 20px;
}
.tree a {
    color: #000;
    text-decoration: none;
}
.tree svg {
    margin: 2px 11px 0 5px;
}
.tree .page {
    width: 13px;
    height: 15px;
    margin: -1px 9px 0 1px;
}
.tree .open {
    margin: 3px 8px 0 3px;
}
.subtree {
    margin: -2px -10px 0 22px;
}
.subtree li {
    padding-right: 16px;
}
.vscroll {
    display: flex;
    flex-direction: column;
    align-items: center;
    flex: none;
    width: 20px;
    padding: 8px 0;
    color: #505050;
    background: #f1f1f1;
}
.vscroll svg {
    width: 9px;
    height: 5px;
}
.vscroll .up {
    color: #a0a0a0;
}
.vscroll .dark {
    color: #505050;
}
.vscroll .track {
    flex: 1;
    width: 17px;
    margin: 8px 0;
}
.thumb {
    background: #c1c1c1;
}
.side-thumb {
    height: 55%;
}
.main-thumb {
    height: 42%;
    margin-top: 172px;
}
.splitter {
    flex: none;
    width: 7px;
    background: #e4e4e4;
    border-left: 2px solid #b4b4b4;
    border-right: 1px solid #b4b4b4;
}
.content {
    display: flex;
    flex-direction: column;
    flex: 1;
    min-width: 0;
}
.topic-header {
    display: flex;
    justify-content: space-between;
    flex: none;
    height: 72px;
    padding: 4px 14px 0 6px;
    color: #fff;
    background: #a31f24;
}
.crumbs {
    font-size: 13px;
    line-height: 18px;
}
.crumbs a {
    color: #fff;
}
h1 {
    font-size: 37px;
    line-height: 45px;
}
.pager {
    display: flex;
    align-items: center;
    gap: 12px;
    height: 60px;
}
.topic-row {
    display: flex;
    flex: 1;
    min-height: 0;
}
.topic {
    flex: 1;
    min-width: 0;
    padding: 0 11px 0 9px;
    overflow: hidden;
    white-space: nowrap;
}
.note {
    height: 39px;
    margin: 0 4px 41px;
    padding: 1px 0 0 11px;
    font-size: 18px;
    line-height: 21px;
    background: #f7f8fa;
    border-left: 4px solid #a8b5c5;
}
.note a {
    color: #a31f24;
}
.toggle {
    position: relative;
    display: block;
    width: 100%;
    height: 33px;
    margin-bottom: 20px;
    padding: 4px 0 0 40px;
    font-size: 20px;
    text-align: left;
    background: #fafafa;
    border: 1px solid #dcdcdc;
}
.toggle svg {
    position: absolute;
    left: 10px;
    top: 8px;
}
.toggle .open {
    left: 8px;
    top: 11px;
}
.results {
    padding: 5px 0 0 68px;
}
.results h2 {
    font-size: 20px;
    line-height: 26px;
    color: #a31f24;
}
.results p {
    font-size: 18px;
    line-height: 21px;
}
.periods {
    position: relative;
    margin: 23px 0 55px 25px;
    font-size: 22px;
    line-height: 26px;
}
.period-row {
    display: flex;
    height: 58px;
    margin-bottom: -2px;
    text-align: center;
}
.period-row span {
    padding-top: 2px;
    border: 2px solid #333;
}
.opt {
    width: 252px;
    background: #ffe49a;
}
.test {
    width: 164px;
    margin-left: -2px;
    background: #a4c2f4;
}
.step-1 {
    margin-left: 162px;
}
.step-2 {
    margin-left: 325px;
}
.step-3 {
    margin-left: 487px;
}
.ink {
    position: absolute;
    left: 0;
    top: 0;
    fill: none;
    stroke: #ff0a8a;
    stroke-width: 7;
    stroke-linecap: round;
    stroke-linejoin: round;
}
.analyzer {
    margin: 20px -11px 0 0;
    border: 1px solid #000;
    border-width: 2px 0 0 2px;
}
.analyzer-title {
    display: flex;
    height: 29px;
    border-bottom: 2px solid #222;
}
.analyzer-title span {
    padding: 0 8px 0 7px;
    font-size: 18px;
    line-height: 27px;
    color: #fff;
    background: linear-gradient(#a31f24, #6b1519);
    box-shadow: 2px 0 3px #888;
}
.analyzer-body {
    display: flex;
    gap: 8px;
    height: 130px;
    padding: 7px 0 0 7px;
    background: #e5e6e8;
}
.grid-box {
    position: relative;
    display: flex;
    flex: 1;
    min-width: 0;
    padding: 7px;
    background: #fff;
    border: 2px solid #333;
}
.grid {
    flex: 1;
    width: 0;
    height: 100px;
    table-layout: fixed;
    border-collapse: collapse;
}
.grid th, .grid td {
    padding: 0 0 0 5px;
    border: 1px solid #333;
    border-width: 0 1px;
    overflow: hidden;
    font-weight: normal;
    text-align: left;
}
.grid th {
    height: 36px;
    padding-left: 8px;
    font-size: 15px;
    border-width: 1px 1px 2px;
}
.grid td {
    height: 26px;
    font-size: 16px;
}
.grid td.wide {
    padding-left: 8px;
}
.grid .first {
    width: 135px;
    padding-left: 28px;
}
.grid td .open {
    float: left;
    margin: 5px 0 0 -23px;
}
.sort {
    display: inline-block;
    width: 8px;
    height: 4px;
    vertical-align: middle;
}
.selected td {
    background: #cdcdcd;
}
.selected .first {
    background: linear-gradient(to right, #fff 22px, #cdcdcd 22px);
}
.neg {
    color: #f01818;
}
.grid-scroll {
    width: 18px;
    border: 1px solid #333;
    border-left: none;
}
.spin {
    display: flex;
    flex-direction: column;
    align-items: center;
    justify-content: space-between;
    height: 36px;
    padding: 7px 0;
    border-bottom: 2px solid #555;
}
.spin svg {
    width: 10px;
    height: 6px;
}
.grid-thumb {
    height: 55px;
    background: #f0f0f0;
    border: 1px solid #bbb;
}
.arrow-tip {
    position: absolute;
    left: 466px;
    top: 98px;
}
.settings-box {
    flex: none;
    width: 40px;
    overflow: hidden;
    font-size: 15px;
    background: #fff;
    border: 2px solid #333;
    border-right: none;
}
.settings-title {
    height: 35px;
    padding: 8px 0 0 7px;
    border-bottom: 1px solid #222;
}
.settings-group {
    display: flex;
    align-items: center;
    gap: 8px;
    padding: 12px 0 0 7px;
}
.hscroll {
    display: flex;
    align-items: center;
    flex: none;
    height: 21px;
    padding: 0 28px 0 8px;
    color: #505050;
    background: #f1f1f1;
    border-bottom: 1px solid #b8b8b8;
}
.hscroll svg {
    width: 5px;
    height: 9px;
}
.hscroll .left {
    color: #a0a0a0;
    transform: rotate(180deg);
}
.hscroll .track {
    flex: 1;
    margin: 0 8px;
}
.hscroll .thumb {
    width: 79%;
    height: 17px;
}

/* taskbar */
.taskbar {
    display: flex;
    flex: none;
    height: 49px;
    background: #0c0c0c;
}
.taskbar button {
    display: flex;
    align-items: center;
    justify-content: center;
    width: 62px;
    padding-bottom: 3px;
}
.taskbar .start {
    width: 61px;
}
.taskbar .running {
    background: linear-gradient(#76b9ed, #76b9ed) bottom / 51px 4px no-repeat;
}
.taskbar .stacked {
    background: linear-gradient(to right, #76b9ed 40px, #5a8db8 40px) bottom / 51px 4px no-repeat;
}
.taskbar .current {
    background: linear-gradient(#76b9ed, #76b9ed) bottom / 100% 4px no-repeat #3b3b3b;
}
.tray {
    display: flex;
    align-items: center;
    margin-left: auto;
    padding-right: 26px;
    color: #fff;
}
.taskbar .tray button {
    width: 30px;
}
.taskbar .tray button:first-child {
    margin-right: 15px;
}
.clock {
    display: flex;
    flex-direction: column;
    align-items: center;
    width: 86px;
    margin-right: 9px;
    font-family: "Open Sans", sans-serif;
    font-size: 14px;
    line-height: 23px;
}

/* pen tool floats over the page */
.pen-tool {
    position: fixed;
    left: 141px;
    top: 412px;
    width: 42px;
}
.pen-badge, .pen-panel button {
    display: flex;
    align-items: center;
    justify-content: center;
}
.pen-badge {
    width: 42px;
    height: 42px;
    margin-bottom: 10px;
    border-radius: 50%;
    background: #000;
}
.pen-panel {
    padding: 2px;
    background: #fff;
    box-shadow: 3px 3px 12px rgba(0, 0, 0, .5);
}
.pen-panel button {
    width: 38px;
    height: 37px;
}
.pen-panel .on {
    height: 38px;
    background: #32c1ee;
}
.pen-panel .cursor {
    margin-top: 14px;
}
.pen-panel .corner {
    background: linear-gradient(135deg, #32c1ee 89%, #222 89%);
}
.palette {
    display: grid;
    grid-template-columns: 19px 19px;
    grid-template-rows: 19px 18px 35px;
    margin-top: 6px;
}
.pen-panel .palette button {
    width: auto;
    height: auto;
}
.cyan {
    background: #00aeef;
}
.yellow {
    background: #fff200;
}
.magenta {
    background: #ff0a8a;
}
.black {
    background: #000;
}
.palette .chosen {
    grid-column: 1 / 3;
    background: linear-gradient(135deg, #ff0a8a 86%, #000 86%);
}
```
